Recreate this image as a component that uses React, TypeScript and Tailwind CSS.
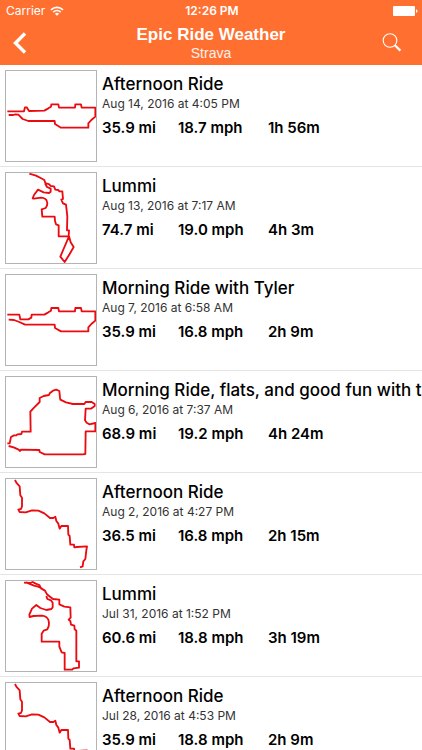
type Ride = {
  title: string;
  date: string;
  distance: string;
  speed: string;
  duration: string;
  route: string;
};

// Route tracks, drawn on a 270 x 270 canvas
const valleyLoop =
  "M4 121H54L57 109H62L69 120L115 119L127 112L135 107L136 100H157L159 110H207L208 100H225L227 110H268V137L256 147L247 157V170H165L147 159L146 150H67L50 144L37 131L28 130L22 132H8";
const valleyLoopSouth =
  "M4 119H40L43 133H67L76 128L77 119H115L127 112L135 107L136 99H157L159 109H207L208 99H225L227 109H268V137L256 147L247 157V169H165L147 159L146 149H57L40 141L24 135L8 134";
const lummiLong =
  "M70 2L90 8L104 15L115 21L118 30L130 34L134 39L144 40L148 50L157 51L160 55H169L171 78L166 80L171 91L180 95L184 130L183 172H189L188 190H158V157L150 154L147 144L146 131H109L107 109L119 105Q126 96 123 86Q121 75 105 74L84 77L80 76L84 66L96 50L113 58L129 60L134 56V47L123 42L117 31M189 190L194 208L203 222L191 243L176 267L163 251L174 225L189 190";
const islandLoop =
  "M4 199H11L15 180L24 175H31L34 172L46 171L48 164H74L73 104L82 94L101 75V63L113 57L129 54L131 49L141 41L151 38L160 42L162 62L163 68L180 76L201 81H235L239 75H257L266 81V87L255 95H239L237 130L242 137L250 142L268 138V163H239L238 231L230 232H116L101 225L100 219L45 218L42 222L38 218L23 211L8 207";
const bayDescent =
  "M27 3L31 11L41 22L43 49L48 56V82L45 90L37 92L41 99L59 100L78 94L97 95L115 103L132 117L142 117L148 113L151 126L157 134L161 149L166 141H186L187 167L191 171L193 197L204 197L205 205L212 204L243 202L241 214L238 240L232 247L230 262L222 265";
const lummiShort =
  "M54 5L72 6L80 3L89 8L100 12L105 22L117 29L123 40L132 47L141 54L160 56L160 70L175 77L193 79L194 110L188 116L193 120L195 131L205 134L206 145L211 149V241H219V260L203 262L198 266H176V216L167 214L160 197V182H107V158L113 149L124 145Q132 133 127 116Q121 105 108 104L82 105L71 108L70 101L78 83L91 72L103 81L121 87L136 84L140 79V65L135 58L124 54L121 45M60 4L84 14L96 17L108 22";

const rides: Ride[] = [
  { title: "Afternoon Ride", date: "Aug 14, 2016 at 4:05 PM", distance: "35.9 mi", speed: "18.7 mph", duration: "1h 56m", route: valleyLoop },
  { title: "Lummi", date: "Aug 13, 2016 at 7:17 AM", distance: "74.7 mi", speed: "19.0 mph", duration: "4h 3m", route: lummiLong },
  { title: "Morning Ride with Tyler", date: "Aug 7, 2016 at 6:58 AM", distance: "35.9 mi", speed: "16.8 mph", duration: "2h 9m", route: valleyLoopSouth },
  { title: "Morning Ride, flats, and good fun with t", date: "Aug 6, 2016 at 7:37 AM", distance: "68.9 mi", speed: "19.2 mph", duration: "4h 24m", route: islandLoop },
  { title: "Afternoon Ride", date: "Aug 2, 2016 at 4:27 PM", distance: "36.5 mi", speed: "16.8 mph", duration: "2h 15m", route: bayDescent },
  { title: "Lummi", date: "Jul 31, 2016 at 1:52 PM", distance: "60.6 mi", speed: "18.8 mph", duration: "3h 19m", route: lummiShort },
  { title: "Afternoon Ride", date: "Jul 28, 2016 at 4:53 PM", distance: "35.9 mi", speed: "18.8 mph", duration: "2h 9m", route: bayDescent },
];

function StatusBar() {
  return (
    <div className="grid h-[21px] grid-cols-3 items-center pr-1 pl-[6px] text-xs">
      <div className="flex items-center gap-[5px]">
        <span>Carrier</span>
        <svg viewBox="0 0 14 10" className="h-[10px] w-[14px]" fill="none" stroke="currentColor" strokeWidth="1.6">
          <path d="M1 3.9a8.5 8.5 0 0 1 12 0M3.3 6.1a5.200 5.200 0 0 1 7.400 0" />
          <path d="M7 9.8 4.9 7.7a3 3 0 0 1 4.2 0Z" fill="currentColor" stroke="none" />
        </svg>
      </div>
      <span className="text-center font-semibold">12:26 PM</span>
      <svg viewBox="0 0 25 10" className="h-[10px] w-[25px] justify-self-end" fill="currentColor">
        <rect width="22" height="10" rx="1" />
        <path d="M23 3.2q1.6.4 1.6 1.8T23 6.8Z" />
      </svg>
    </div>
  );
}

function Header() {
  return (
    <header className="h-[65px] bg-[#ff6f2f] text-white">
      <StatusBar />
      <div className="flex h-11 items-center justify-between px-[10px]">
        <button type="button" aria-label="Back" className="flex w-10 items-center">
          <svg viewBox="0 0 20 24" className="h-6 w-5" fill="none" stroke="currentColor" strokeWidth="3.4">
            <path d="M15 2.5 5.500 12l9.500 9.500" />
          </svg>
        </button>
        <div className="text-center font-['Liberation_Sans',sans-serif]">
          <h1 className="text-[17px] leading-5 font-bold">Epic Ride Weather</h1>
          <p className="text-sm leading-4 text-white/90">Strava</p>
        </div>
        <button type="button" aria-label="Search" className="flex w-10 items-center justify-center">
          <svg viewBox="0 0 20 20" className="h-5 w-5" fill="none" stroke="currentColor">
            <circle cx="8" cy="7.5" r="6.8" strokeWidth="1.1" />
            <path d="m12.6 12 5.8 5.6" strokeWidth="2.2" />
          </svg>
        </button>
      </div>
    </header>
  );
}

function RideRow({ ride }: { ride: Ride }) {
  return (
    <li className="flex h-[102px] items-start gap-[5px] overflow-hidden border-b border-[#e4e4e4] pt-[5px] pl-[5px]">
      <div className="h-[92px] w-[92px] shrink-0 border border-[#b4b4b4]">
        <svg viewBox="0 0 270 270" className="h-full w-full" fill="none" stroke="#ea0a10" strokeWidth="5.5" strokeLinejoin="round">
          <path d={ride.route} />
        </svg>
      </div>
      <div className="min-w-0 flex-1 pt-[2px] whitespace-nowrap">
        <h2 className="text-[17px] leading-6 font-medium">{ride.title}</h2>
        <p className="text-xs leading-4 text-[#333]">{ride.date}</p>
        <div className="mt-1 flex text-[15px] leading-6 font-semibold">
          <span className="w-[76px]">{ride.distance}</span>
          <span className="w-[90px]">{ride.speed}</span>
          <span>{ride.duration}</span>
        </div>
      </div>
    </li>
  );
}

export default function App() {
  return (
    <div className="h-screen overflow-hidden bg-white font-['Inter',sans-serif] text-black">
      <Header />
      <ul>
        {rides.map((ride) => (
          <RideRow key={ride.date} ride={ride} />
        ))}
      </ul>
    </div>
  );
}
